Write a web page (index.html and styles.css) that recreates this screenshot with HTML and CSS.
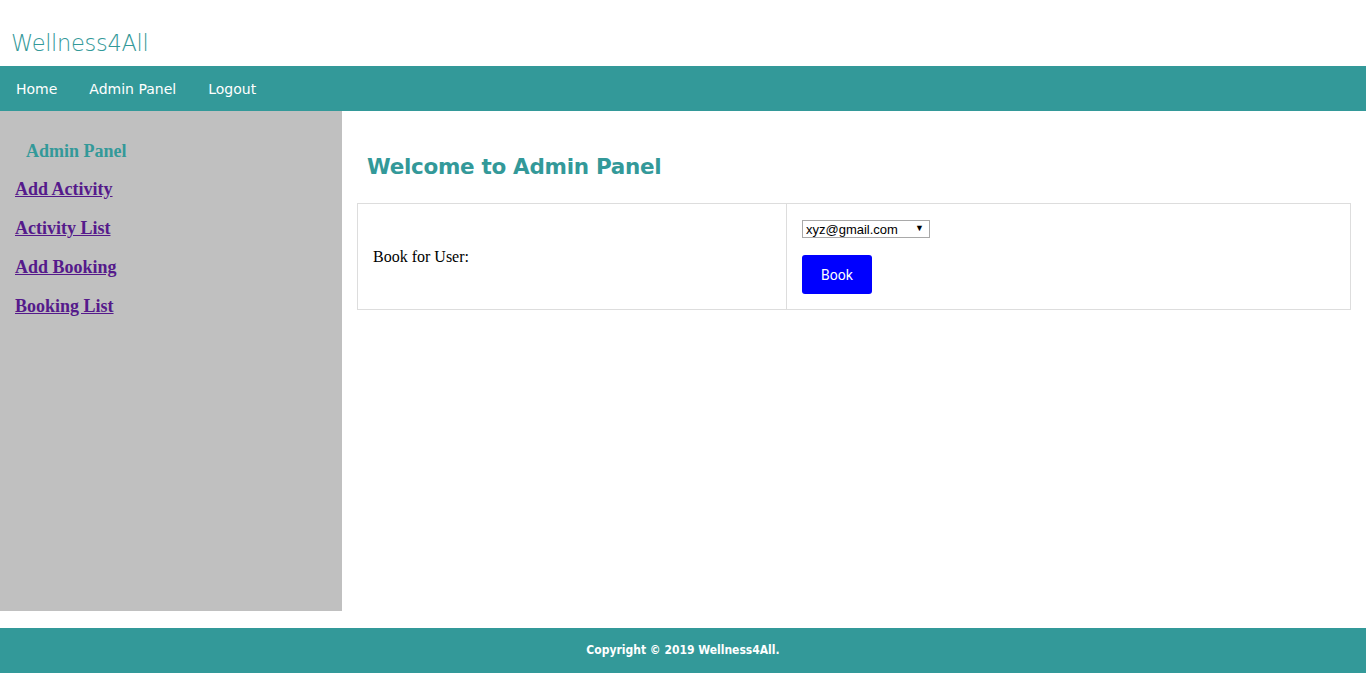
FILE: index.html
```html
<!DOCTYPE html>
<html lang="en">
<head>
  <meta charset="UTF-8">
  <title>Wellness4All - Admin Panel</title>
  <link rel="stylesheet" href="styles.css">
</head>
<body>

  <!-- Logo -->
  <header class="top">
    <div class="logo">Wellness4All</div>
  </header>

  <!-- Main Menu -->
  <nav class="menu">
    <a href="#">Home</a>
    <a href="#">Admin Panel</a>
    <a href="#">Logout</a>
  </nav>

  <div class="layout">
    <!-- Sidebar -->
    <aside class="sidebar">
      <h3>Admin Panel</h3>
      <a href="#">Add Activity</a>
      <a href="#">Activity List</a>
      <a href="#">Add Booking</a>
      <a href="#">Booking List</a>
    </aside>

    <!-- Content -->
    <main class="content">
      <h2>Welcome to Admin Panel</h2>
      <table class="book-table">
        <tr>
          <td class="label-cell">Book for User:</td>
          <td>
            <div class="select-wrap">
              <select class="user-select">
                <option>xyz@gmail.com</option>
              </select>
            </div>
            <button class="book-btn">Book</button>
          </td>
        </tr>
      </table>
    </main>
  </div>

  <footer class="footer">Copyright &copy; 2019 Wellness4All.</footer>

</body>
</html>
```

FILE: styles.css
```css
/* General */
body {
  margin: 0;
  font-family: 'Liberation Serif', serif;
  background: white;
}

/* Header */
.top {
  height: 66px;
  display: flex;
  align-items: flex-end;
  padding-left: 11px;
  box-sizing: border-box;
  padding-bottom: 10px;
}

.logo {
  font-family: 'DejaVu Sans', sans-serif;
  font-weight: 200;
  font-size: 22.5px;
  color: #339999;
  letter-spacing: -0.3px;
}

/* Menu */
.menu {
  height: 45px;
  background-color: #339999;
  display: flex;
  align-items: center;
}

.menu a {
  font-family: 'DejaVu Sans', sans-serif;
  font-size: 14px;
  color: white;
  text-decoration: none;
  padding: 0 16px;
}

/* Layout */
.layout {
  display: flex;
}

.sidebar {
  width: 342px;
  height: 500px;
  background-color: #c0c0c0;
  padding: 30px 0 0 15px;
  box-sizing: border-box;
}

.sidebar h3 {
  margin: 0 0 17px 11px;
  font-size: 18px;
  color: #339999;
}

.sidebar a {
  display: block;
  font-size: 18px;
  font-weight: bold;
  color: #551a8b;
  margin-bottom: 18px;
}

.content {
  flex: 1;
  padding: 0 15px;
}

.content h2 {
  font-family: 'DejaVu Sans', sans-serif;
  font-size: 21.5px;
  color: #339999;
  margin: 43px 0 24px 10px;
  letter-spacing: -0.3px;
}

/* Booking table */
.book-table {
  width: 100%;
  border-collapse: collapse;
}

.book-table td {
  border: 1px solid #dddddd;
  padding: 15px;
  font-size: 16px;
  vertical-align: middle;
}

.book-table .label-cell {
  width: 398px;
  padding-top: 16px;
}

/* Select with a small black arrow */
.select-wrap {
  position: relative;
  width: 128px;
  margin: 1px 0 17px;
}

.select-wrap::after {
  content: "\25BC";
  position: absolute;
  right: 6px;
  top: 3px;
  font-size: 9px;
  color: black;
  pointer-events: none;
}

.user-select {
  display: block;
  -webkit-appearance: none;
  appearance: none;
  font-family: 'Liberation Sans', sans-serif;
  font-size: 13px;
  height: 18px;
  width: 128px;
  border: 1px solid #a9a9a9;
  border-radius: 0;
  background: white;
  color: black;
  padding: 0 0 0 3px;
}

.book-btn {
  display: block;
  width: 70px;
  height: 39px;
  background-color: #0000ff;
  color: white;
  border: none;
  border-radius: 3px;
  font-family: 'Roboto', sans-serif;
  font-size: 14px;
}

/* Footer */
.footer {
  margin-top: 17px;
  height: 45px;
  line-height: 45px;
  background-color: #339999;
  color: white;
  text-align: center;
  font-family: 'DejaVu Sans Condensed', 'DejaVu Sans', sans-serif;
  font-stretch: condensed;
  font-size: 12px;
  font-weight: bold;
}
```
